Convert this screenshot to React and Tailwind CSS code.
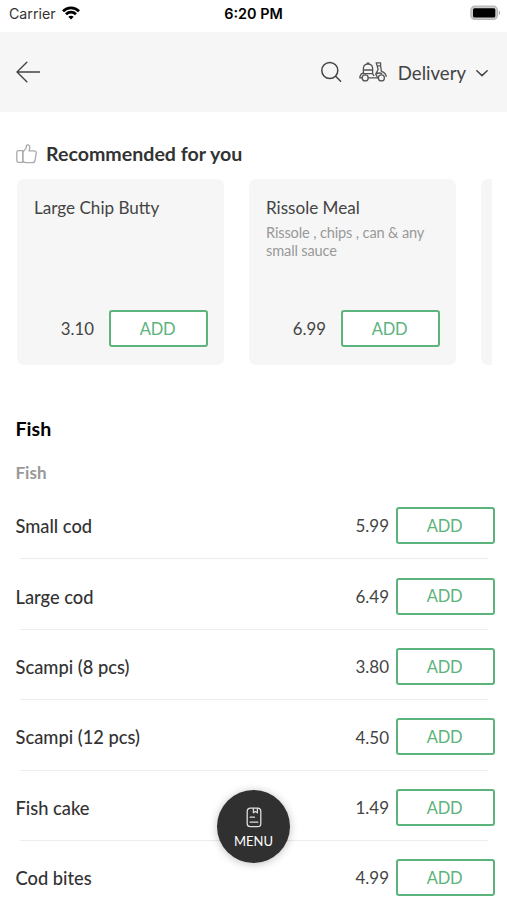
import React from 'react';

const recommended = [
  { name: 'Large Chip Butty', description: '', price: '3.10' },
  { name: 'Rissole Meal', description: 'Rissole , chips , can & any small sauce', price: '6.99' },
];

const items = [
  { name: 'Small cod', price: '5.99' },
  { name: 'Large cod', price: '6.49' },
  { name: 'Scampi (8 pcs)', price: '3.80' },
  { name: 'Scampi (12 pcs)', price: '4.50' },
  { name: 'Fish cake', price: '1.49' },
  { name: 'Cod bites', price: '4.99' },
];

const AddButton = () => (
  <button
    type="button"
    className="w-[99px] h-[37px] shrink-0 rounded-[3px] border-2 border-[#5cb37c] bg-white pt-px pr-[2px] text-[16.5px] tracking-[-0.3px] leading-none text-[#5cb37c]"
  >
    ADD
  </button>
);

const StatusBar = () => (
  <div className="relative flex h-8 items-start justify-between pl-[9px] pr-[6px] font-['Inter'] text-black">
    <div className="flex items-center pt-[4px]">
      <span className="text-[14.2px] leading-5 text-[#333]">Carrier</span>
      <svg className="ml-[6px] -mt-[2px] h-[14px] w-[18px]" viewBox="0 0 18 14">
        <g fill="none" stroke="currentColor" strokeWidth="2.7">
          <path d="M1 5.2C5.4.7 12.6.7 17 5.2" />
          <path d="M4 8.3c2.8-2.8 7.2-2.8 10 0" />
        </g>
        <path d="M6.3 10.7c1.5-1.4 3.9-1.4 5.4 0L9 13.6z" fill="currentColor" />
      </svg>
    </div>
    <span className="absolute left-1/2 top-[4px] -translate-x-1/2 whitespace-nowrap text-[14.4px] font-semibold leading-5">
      6:20 PM
    </span>
    <svg className="mt-[5px] h-4 w-[31px]" viewBox="0 0 31 16">
      <rect x=".9" y="1.2" width="26.5" height="13.2" rx="4" fill="#ccc" stroke="#b5b5b5" strokeWidth="1.2" />
      <rect x="3" y="3.2" width="22.3" height="9.2" rx="1.5" fill="#000" />
      <path d="M28.8 5.6v4.6c1.7-.7 1.7-3.9 0-4.6z" fill="#aaa" />
    </svg>
  </div>
);

const Header = () => (
  <header className="flex h-20 items-center bg-[#f6f6f6] pl-4 pr-[18px] text-[#444]">
    <svg className="h-6 w-6" viewBox="0 0 24 24" fill="none" stroke="currentColor" strokeWidth="1.4" strokeLinecap="round" strokeLinejoin="round">
      <path d="M23.5 12H1.2M10.8 2.2 1 12l9.8 9.8" />
    </svg>
    <svg className="ml-auto h-[22px] w-[22px]" viewBox="0 0 22 22" fill="none" stroke="currentColor" strokeWidth="1.5" strokeLinecap="round">
      <circle cx="9.8" cy="9.5" r="8" />
      <path d="m15.6 15.3 5 5" />
    </svg>
    {/* Scooter */}
    <svg className="ml-[17px] h-5 w-[28px]" viewBox="0 0 28 20" fill="none" stroke="#555" strokeWidth="1.3" strokeLinecap="round" strokeLinejoin="round">
      <path d="M4.4 8V6.6C4.4 4 6.2 2.2 9 2.2s4.6 1.8 4.6 4.4V8zM7.8 2.2c0-1.7 2.4-1.7 2.4 0" />
      <path d="M4.4 8v3.6h9.2V8M4.4 10.8C2.2 11.6.9 13.4.8 15.8h2.3M13.6 11.6l1.2 2M9.3 15.8h9.4" />
      <path d="M17.2.9h4.4v3h-3.4zM18.2 3.9l.9 3.6-2.4 4.6 2 3.7M21.6 3.9l.8 5.4c2.7.7 4.4 2.6 4.8 5.1M16.7 12.1c2.2-1.2 4.2-1.5 6-.6" />
      <circle cx="6.2" cy="15.9" r="3" />
      <circle cx="22.4" cy="15.9" r="3" />
    </svg>
    <span className="ml-[11px] text-[18.6px] leading-6 pt-px">Delivery</span>
    <svg className="ml-[9px] mt-px h-3 w-[14px]" viewBox="0 0 14 12" fill="none" stroke="currentColor" strokeWidth="1.5" strokeLinecap="round" strokeLinejoin="round">
      <path d="m1.8 3.8 5.2 4.8 5.2-4.8" />
    </svg>
  </header>
);

const RecommendedCard = ({ item }) => (
  <div className="flex w-[207px] shrink-0 flex-col rounded-[7px] bg-[#f6f6f6] px-[17px] pb-[18px] pt-[17px]">
    <h3 className="text-[17.1px] leading-[23px] text-[#444]">{item.name}</h3>
    <p className="mt-[5px] text-[14.6px] leading-[17.5px] tracking-[-0.15px] text-[#999]">{item.description}</p>
    <div className="-mr-px mt-auto flex items-center justify-end gap-[15px]">
      <span className="text-[16.8px] text-[#444]">{item.price}</span>
      <AddButton />
    </div>
  </div>
);

const MenuRow = ({ item }) => (
  <div className="relative flex h-[70.4px] items-start justify-between pl-[15.5px] pr-3">
    <span className="mt-[25.2px] text-[18.3px] font-medium leading-6 text-[#333]">{item.name}</span>
    <div className="mt-[18.2px] flex items-center gap-[7px]">
      <span className="pt-px text-[17px] text-[#444]">{item.price}</span>
      <AddButton />
    </div>
    <div className="absolute bottom-0 left-5 right-[19px] h-px bg-[#ececec]"></div>
  </div>
);

const App = () => {
  return (
    <div className="relative h-[900px] w-full overflow-hidden bg-white font-['Lato',sans-serif]">
      <StatusBar />
      <Header />

      <section className="pt-[30px]">
        <div className="flex h-6 items-center pl-4">
          <svg className="h-5 w-[21px]" viewBox="0 0 21 20" fill="none" stroke="#aaa" strokeWidth="1.3" strokeLinejoin="round">
            <path d="M6.8 8.1 9.8 4.6c.6-.8.3-3 1-3.5 1-.7 2.7 0 3 1.8.2 1.5-.5 2.9-.8 4h5.2c1.4 0 2.2 1 2 2.4l-1.2 7.2c-.3 1.5-1.2 2.2-2.6 2.2h-5.9c-1.6 0-2.4-1-3.7-1.2z" />
            <path d="M6.8 6.6H2.5C1.3 6.6.8 7.2.8 8.3v8.4c0 1.1.5 1.7 1.7 1.7h4.3z" />
          </svg>
          <h2 className="ml-[9px] text-[19.6px] font-bold text-[#333]">Recommended for you</h2>
        </div>
        <div className="ml-[17px] mr-[15px] mt-[13px] flex h-[186px] gap-[25px] overflow-hidden">
          {recommended.map((item) => (
            <RecommendedCard key={item.name} item={item} />
          ))}
          <div className="w-[207px] shrink-0 rounded-[7px] bg-[#f6f6f6]"></div>
        </div>
      </section>

      <section className="pt-[52px]">
        <h2 className="pl-[15.5px] text-[19.6px] font-bold leading-6 text-black">Fish</h2>
        <h3 className="mb-[4px] mt-[20px] pl-[15.5px] text-[17px] font-bold leading-6 text-[#999]">Fish</h3>
        {items.map((item) => (
          <MenuRow key={item.name} item={item} />
        ))}
      </section>

      {/* Floating menu button */}
      <button
        type="button"
        className="absolute left-[217px] top-[790px] flex h-[73px] w-[73px] flex-col items-center rounded-full bg-[#303030] pt-[17px] text-white shadow-[0_1px_8px_rgba(0,0,0,0.25)]"
      >
        <svg className="h-[21px] w-4" viewBox="0 0 16 21" fill="none" stroke="#ddd" strokeWidth="1.3" strokeLinecap="round" strokeLinejoin="round">
          <rect x="1.2" y="1.2" width="13.6" height="18.4" rx="3.2" />
          <path d="M7.4 1.4v4.4l2-1.3 2 1.3V1.4M4.2 10.2h4.3M4.2 15.2h7.6" />
        </svg>
        <span className="mt-[5px] text-[13px] leading-4">MENU</span>
      </button>
    </div>
  );
};

export default App;
